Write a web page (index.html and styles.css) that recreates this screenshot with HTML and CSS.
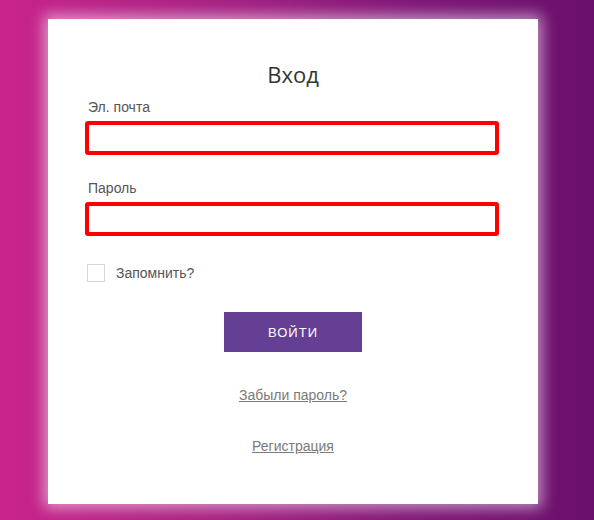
FILE: index.html
```html
<!DOCTYPE html>
<html lang="ru">
<head>
<meta charset="utf-8">
<title>Вход</title>
<link rel="stylesheet" href="styles.css">
</head>
<body>
<div class="page">
  <form class="card">
    <h1 class="title">Вход</h1>
    <label class="label" for="email">Эл. почта</label>
    <input class="field" id="email" type="text">
    <label class="label label-second" for="pass">Пароль</label>
    <input class="field" id="pass" type="password">
    <div class="remember">
      <span class="check"></span>
      <span class="remember-text">Запомнить?</span>
    </div>
    <div class="actions">
      <button class="btn" type="button">ВОЙТИ</button>
      <a class="link link-forgot" href="#">Забыли пароль?</a>
      <a class="link link-reg" href="#">Регистрация</a>
    </div>
  </form>
</div>
</body>
</html>
```
FILE: styles.css
```css
html, body {
  margin: 0;
  padding: 0;
}
body {
  width: 594px;
  height: 520px;
  overflow: hidden;
  background: linear-gradient(to right, #c9248b 0%, #a31f80 40%, #7e1676 70%, #6a0f6c 100%);
  font-family: "Liberation Sans", Arial, sans-serif;
}
.page {
  padding: 19px 0 0 48px;
}
.card {
  box-sizing: border-box;
  width: 490px;
  height: 485px;
  background: #fff;
  box-shadow: 0 0 14px 4px rgba(255, 255, 255, 0.55);
  padding: 40px 39px 0 37px;
  display: flex;
  flex-direction: column;
}
.title {
  margin: 0;
  font-family: "Open Sans", "Noto Sans", sans-serif;
  font-weight: 400;
  font-size: 22px;
  line-height: 30px;
  color: #333;
  text-align: center;
  padding-left: 2px;
}
.label {
  display: block;
  margin: 10px 0 6px 3px;
  font-size: 14px;
  line-height: 16px;
  color: #555;
}
.label-second {
  margin-top: 25px;
}
.field {
  box-sizing: border-box;
  display: block;
  width: 414px;
  height: 34px;
  margin: 0;
  border: 4px solid #ff0000;
  border-radius: 3px;
  background: #fff;
  outline: none;
  padding: 0 8px;
}
.remember {
  display: flex;
  align-items: center;
  margin: 28px 0 0 2px;
  height: 18px;
}
.check {
  box-sizing: border-box;
  width: 18px;
  height: 18px;
  border: 1px solid #d6d6d6;
  background: #fff;
}
.remember-text {
  margin-left: 11px;
  font-size: 14px;
  line-height: 16px;
  color: #555;
}
.actions {
  display: flex;
  flex-direction: column;
  align-items: center;
  margin-top: 30px;
  padding-left: 2px;
}
.btn {
  width: 138px;
  height: 40px;
  border: 0;
  background: #643f94;
  color: #fff;
  font-family: "Liberation Sans", Arial, sans-serif;
  font-size: 13px;
  letter-spacing: 1px;
  cursor: pointer;
  padding: 0;
}
.link {
  font-size: 14px;
  line-height: 16px;
  color: #7a7a7a;
  text-decoration: underline;
}
.link-forgot {
  margin-top: 35px;
}
.link-reg {
  margin-top: 35px;
}
```
